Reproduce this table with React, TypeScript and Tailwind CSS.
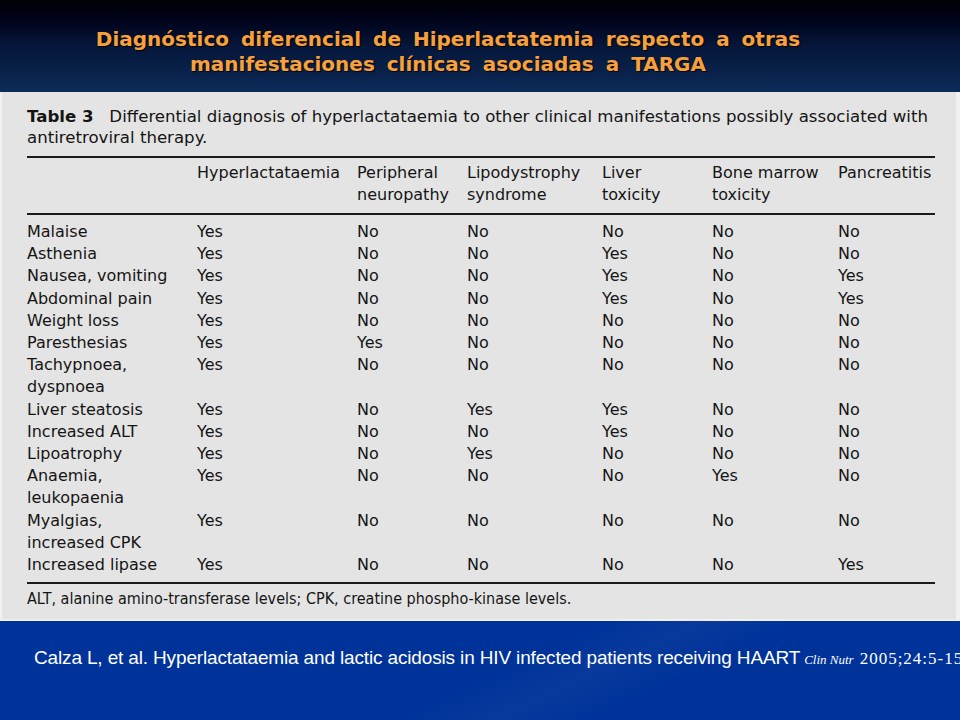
const columns = [
    ['Hyperlactataemia'],
    ['Peripheral', 'neuropathy'],
    ['Lipodystrophy', 'syndrome'],
    ['Liver', 'toxicity'],
    ['Bone marrow', 'toxicity'],
    ['Pancreatitis'],
]

const rows: { label: string[]; values: string[] }[] = [
    { label: ['Malaise'], values: ['Yes', 'No', 'No', 'No', 'No', 'No'] },
    { label: ['Asthenia'], values: ['Yes', 'No', 'No', 'Yes', 'No', 'No'] },
    { label: ['Nausea, vomiting'], values: ['Yes', 'No', 'No', 'Yes', 'No', 'Yes'] },
    { label: ['Abdominal pain'], values: ['Yes', 'No', 'No', 'Yes', 'No', 'Yes'] },
    { label: ['Weight loss'], values: ['Yes', 'No', 'No', 'No', 'No', 'No'] },
    { label: ['Paresthesias'], values: ['Yes', 'Yes', 'No', 'No', 'No', 'No'] },
    { label: ['Tachypnoea,', 'dyspnoea'], values: ['Yes', 'No', 'No', 'No', 'No', 'No'] },
    { label: ['Liver steatosis'], values: ['Yes', 'No', 'Yes', 'Yes', 'No', 'No'] },
    { label: ['Increased ALT'], values: ['Yes', 'No', 'No', 'Yes', 'No', 'No'] },
    { label: ['Lipoatrophy'], values: ['Yes', 'No', 'Yes', 'No', 'No', 'No'] },
    { label: ['Anaemia,', 'leukopaenia'], values: ['Yes', 'No', 'No', 'No', 'Yes', 'No'] },
    { label: ['Myalgias,', 'increased CPK'], values: ['Yes', 'No', 'No', 'No', 'No', 'No'] },
    { label: ['Increased lipase'], values: ['Yes', 'No', 'No', 'No', 'No', 'Yes'] },
]

const grid = 'grid grid-cols-[170px_160px_110px_135px_110px_126px_1fr]'

function Lines({ lines }: { lines: string[] }) {
    return (
        <div>
            {lines.map((l, i) => (
                <div key={i} className="whitespace-nowrap">{l}</div>
            ))}
        </div>
    )
}

export default function App() {
    return (
        <div className="w-[960px] h-[720px] flex flex-col overflow-hidden bg-[#003399]">
            {/* title band */}
            <header className="h-[92px] shrink-0 bg-gradient-to-b from-[#000006] via-[#06163a] to-[#0c2b58] pt-[27px] pr-[64px] text-center">
                <h1 className="font-['DejaVu_Sans',sans-serif] font-bold text-[20px] leading-[25px] text-[#f8a13c] [word-spacing:5px] [text-shadow:1px_1px_1px_#000]">
                    <div>Diagnóstico diferencial de Hiperlactatemia respecto a otras</div>
                    <div>manifestaciones clínicas asociadas a TARGA</div>
                </h1>
            </header>

            {/* scanned table */}
            <section className="h-[529px] shrink-0 bg-[#e4e4e4] border-l-[2px] border-r-[4px] border-b-[2px] border-[#f1f1f1] pl-[25px] pr-[21px] pt-[14px] text-[#141414] font-['DejaVu_Sans',sans-serif] text-[16px]">
                <div className="leading-[21px] text-[16.6px] whitespace-nowrap">
                    <div>
                        <span className="font-bold">Table 3</span>
                        <span>&nbsp;&nbsp; Differential diagnosis of hyperlactataemia to other clinical manifestations possibly associated with</span>
                    </div>
                    <div>antiretroviral therapy.</div>
                </div>
                <div className="mt-[8px] h-[2px] bg-[#1a1a1a]" />
                <div className={`${grid} leading-[22px] pt-[4px] pb-[7px]`}>
                    <div />
                    {columns.map((c, i) => (
                        <Lines key={i} lines={c} />
                    ))}
                </div>
                <div className="h-[2px] bg-[#1a1a1a]" />
                <div className="pt-[6px] pb-[6px] leading-[22.2px]">
                    {rows.map((r, i) => (
                        <div key={i} className={grid}>
                            <Lines lines={r.label} />
                            {r.values.map((v, j) => (
                                <div key={j}>{v}</div>
                            ))}
                        </div>
                    ))}
                </div>
                <div className="h-[2px] bg-[#1a1a1a]" />
                <p className="pt-[4px] leading-[22px] text-[16px] font-['DejaVu_Sans_Condensed','DejaVu_Sans',sans-serif]">
                    ALT, alanine amino-transferase levels; CPK, creatine phospho-kinase levels.
                </p>
            </section>

            {/* reference */}
            <footer className="flex-1 bg-[linear-gradient(155deg,#003399_0%,#003399_52%,#083a9d_60%,#003399_68%,#003399_100%)] pt-[27px] pl-[34px] overflow-hidden">
                <p className="whitespace-nowrap text-white leading-[20px]">
                    <span className="font-['Liberation_Sans_Narrow','Liberation_Sans',Arial,sans-serif] text-[19px] tracking-[-0.15px]">
                        Calza L, et al. Hyperlactataemia and lactic acidosis in HIV infected patients receiving HAART
                    </span>
                    <span className="font-['Liberation_Serif',serif] italic text-[13px] ml-[4px]">Clin Nutr</span>
                    <span className="font-['Liberation_Serif',serif] text-[17px] tracking-[1px] ml-[6px]">2005;24:5-15</span>
                </p>
            </footer>
        </div>
    )
}
